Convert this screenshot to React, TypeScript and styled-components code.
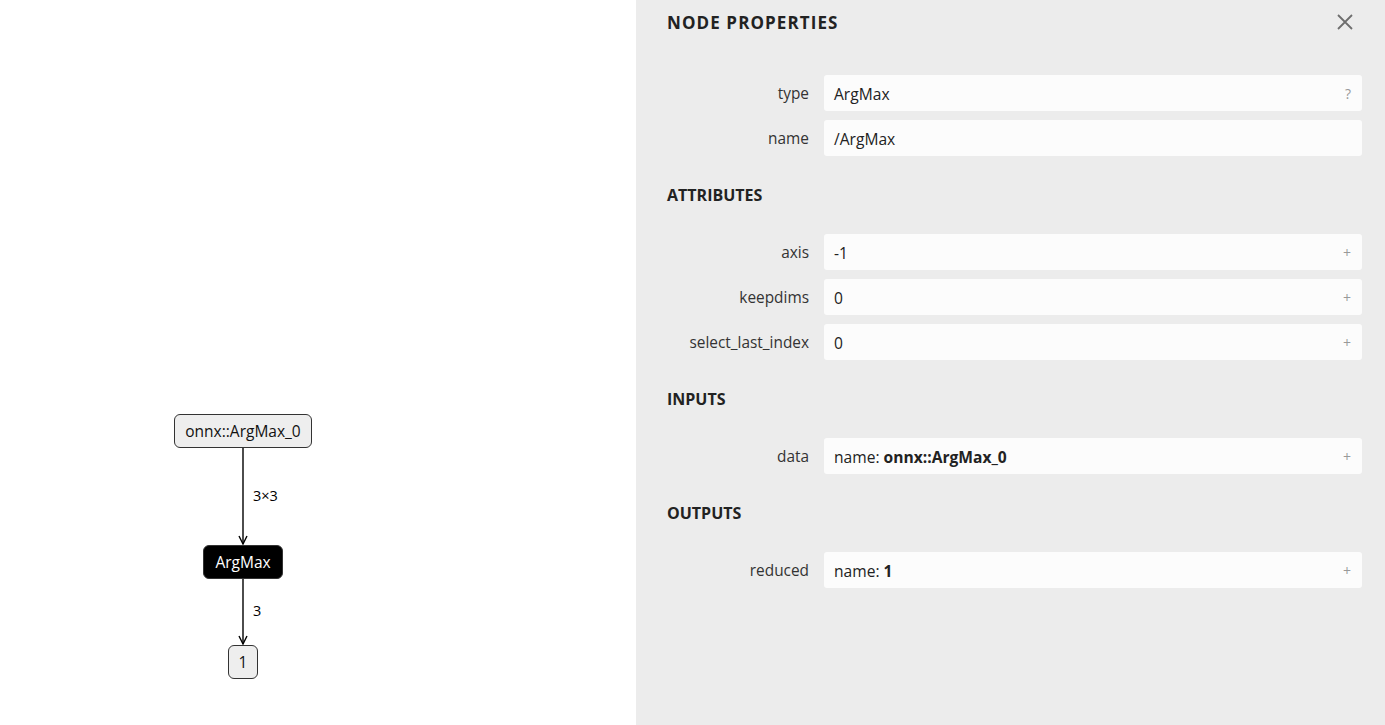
import React from "react";
import styled, { createGlobalStyle } from "styled-components";

const Global = createGlobalStyle`
  html, body { margin: 0; padding: 0; }
  body {
    font-family: "Open Sans", "Noto Sans", "Liberation Sans", sans-serif;
    background: #ffffff;
    color: #333333;
    overflow: hidden;
  }
`;

const Page = styled.div`
  display: flex;
  width: 1385px;
  height: 725px;
`;

const Canvas = styled.div`
  flex: 0 0 636px;
  height: 100%;
  background: #ffffff;
  display: flex;
  flex-direction: column;
  padding-top: 414px;
  box-sizing: border-box;
`;

const GraphColumn = styled.div`
  width: 486px;
  display: flex;
  flex-direction: column;
  align-items: center;
`;

const GraphNode = styled.div<{ $dark?: boolean }>`
  height: 34px;
  min-width: 30px;
  box-sizing: border-box;
  padding: 0 ${(p) => (p.$dark ? 11 : 10)}px;
  display: flex;
  align-items: center;
  justify-content: center;
  border: 1.4px solid #333333;
  border-radius: 6px;
  background: ${(p) => (p.$dark ? "#000000" : "#eeeeee")};
  color: ${(p) => (p.$dark ? "#ffffff" : "#111111")};
  font-family: "Open Sans", "Noto Sans", sans-serif;
  font-size: 15.5px;
`;

const EdgeWrap = styled.div<{ $h: number }>`
  position: relative;
  width: 12px;
  height: ${(p) => p.$h}px;
`;

const EdgeLabel = styled.span`
  position: absolute;
  left: 16px;
  top: 50%;
  transform: translateY(-58%);
  font-size: 14.5px;
  color: #000000;
  white-space: nowrap;
  font-family: "Open Sans", "Noto Sans", sans-serif;
`;

const Edge = ({ h, label }: { h: number; label: string }) => (
  <EdgeWrap $h={h}>
    <svg width="12" height={h} viewBox={`0 0 12 ${h}`} style={{ display: "block" }}>
      <line x1="6" y1="0" x2="6" y2={h - 1} stroke="#000" strokeWidth="1.4" />
      <path d={`M2 ${h - 9} L6 ${h - 1} L10 ${h - 9}`} fill="none" stroke="#000" strokeWidth="1.4" />
    </svg>
    <EdgeLabel>{label}</EdgeLabel>
  </EdgeWrap>
);

const Sidebar = styled.aside`
  flex: 1;
  height: 100%;
  background: #ececec;
  display: flex;
  flex-direction: column;
`;

const Header = styled.div`
  height: 44px;
  display: flex;
  align-items: center;
  justify-content: space-between;
  padding: 0 31px 0 31px;
`;

const Title = styled.h1`
  margin: 0;
  font-size: 17px;
  font-weight: 700;
  letter-spacing: 1.1px;
  color: #222222;
`;

const CloseButton = styled.button`
  border: none;
  background: none;
  padding: 0;
  width: 18px;
  height: 18px;
  display: flex;
  align-items: center;
  justify-content: center;
  cursor: pointer;
`;

const Body = styled.div`
  padding: 31px 23px 0 0;
  display: flex;
  flex-direction: column;
`;

const SectionTitle = styled.h2`
  margin: 29px 0 29px 31px;
  height: 20px;
  line-height: 20px;
  font-size: 16px;
  font-weight: 700;
  color: #222222;
`;

const Rows = styled.div`
  display: grid;
  grid-template-columns: 173px 1fr;
  column-gap: 15px;
  row-gap: 9px;
`;

const Label = styled.div`
  height: 36px;
  line-height: 37px;
  text-align: right;
  font-size: 15.4px;
  color: #333333;
  white-space: nowrap;
`;

const Value = styled.div`
  height: 36px;
  box-sizing: border-box;
  padding: 1px 11px 0 10px;
  background: #fcfcfc;
  border-radius: 3px;
  display: flex;
  align-items: center;
  justify-content: space-between;
  font-size: 15.6px;
  color: #222222;
`;

const Hint = styled.span`
  color: #999999;
  font-size: 14px;
`;

const Strong = styled.b`
  font-weight: 700;
`;

type Row = { label: string; value: React.ReactNode; hint: string };

const RowList = ({ rows }: { rows: Row[] }) => (
  <Rows>
    {rows.map((r) => (
      <React.Fragment key={r.label}>
        <Label>{r.label}</Label>
        <Value>
          <span>{r.value}</span>
          <Hint>{r.hint}</Hint>
        </Value>
      </React.Fragment>
    ))}
  </Rows>
);

export default function App() {
  return (
    <>
      <Global />
      <Page>
        <Canvas>
          <GraphColumn>
            <GraphNode>onnx::ArgMax_0</GraphNode>
            <Edge h={97} label="3×3" />
            <GraphNode $dark>ArgMax</GraphNode>
            <Edge h={66} label="3" />
            <GraphNode>1</GraphNode>
          </GraphColumn>
        </Canvas>
        <Sidebar>
          <Header>
            <Title>NODE PROPERTIES</Title>
            <CloseButton aria-label="close">
              <svg width="18" height="18" viewBox="0 0 18 18">
                <path d="M2 2 L16 16 M16 2 L2 16" stroke="#6e6e6e" strokeWidth="1.8" />
              </svg>
            </CloseButton>
          </Header>
          <Body>
            <RowList
              rows={[
                { label: "type", value: "ArgMax", hint: "?" },
                { label: "name", value: "/ArgMax", hint: "" },
              ]}
            />
            <SectionTitle>ATTRIBUTES</SectionTitle>
            <RowList
              rows={[
                { label: "axis", value: "-1", hint: "+" },
                { label: "keepdims", value: "0", hint: "+" },
                { label: "select_last_index", value: "0", hint: "+" },
              ]}
            />
            <SectionTitle>INPUTS</SectionTitle>
            <RowList
              rows={[
                {
                  label: "data",
                  value: (
                    <>
                      name: <Strong>onnx::ArgMax_0</Strong>
                    </>
                  ),
                  hint: "+",
                },
              ]}
            />
            <SectionTitle>OUTPUTS</SectionTitle>
            <RowList
              rows={[
                {
                  label: "reduced",
                  value: (
                    <>
                      name: <Strong>1</Strong>
                    </>
                  ),
                  hint: "+",
                },
              ]}
            />
          </Body>
        </Sidebar>
      </Page>
    </>
  );
}
